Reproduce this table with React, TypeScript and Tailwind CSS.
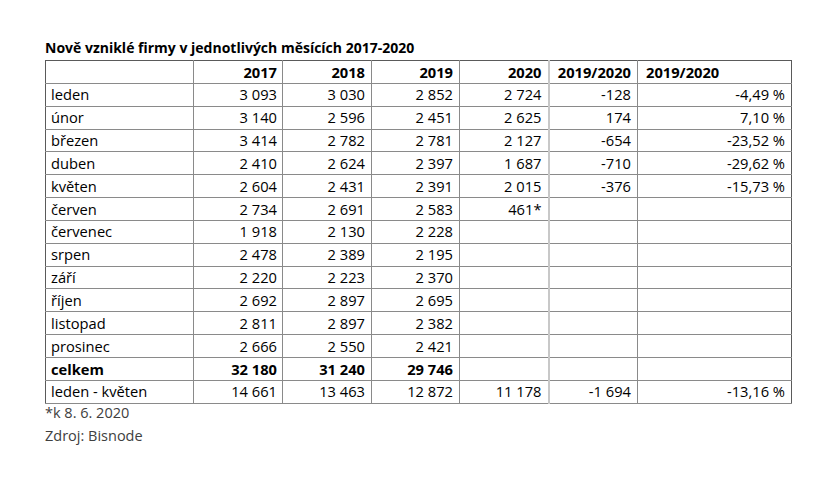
const rows: string[][] = [
  ["leden", "3 093", "3 030", "2 852", "2 724", "-128", "-4,49 %"],
  ["únor", "3 140", "2 596", "2 451", "2 625", "174", "7,10 %"],
  ["březen", "3 414", "2 782", "2 781", "2 127", "-654", "-23,52 %"],
  ["duben", "2 410", "2 624", "2 397", "1 687", "-710", "-29,62 %"],
  ["květen", "2 604", "2 431", "2 391", "2 015", "-376", "-15,73 %"],
  ["červen", "2 734", "2 691", "2 583", "461*", "", ""],
  ["červenec", "1 918", "2 130", "2 228", "", "", ""],
  ["srpen", "2 478", "2 389", "2 195", "", "", ""],
  ["září", "2 220", "2 223", "2 370", "", "", ""],
  ["říjen", "2 692", "2 897", "2 695", "", "", ""],
  ["listopad", "2 811", "2 897", "2 382", "", "", ""],
  ["prosinec", "2 666", "2 550", "2 421", "", "", ""],
];

const total = ["celkem", "32 180", "31 240", "29 746", "", "", ""];
const janMay = ["leden - květen", "14 661", "13 463", "12 872", "11 178", "-1 694", "-13,16 %"];

function Row({ cells, bold, topDark }: { cells: string[]; bold?: boolean; topDark?: boolean }) {
  return (
    <tr className={`h-[22.85px] ${topDark ? "border-t border-t-black" : ""} ${bold ? "font-bold" : ""}`}>
      <td className="px-[5px] text-left">{cells[0]}</td>
      <td className="px-[5px] text-right border-l border-[#8a8a8a]">{cells[1]}</td>
      <td className="px-[6px] text-right border-l border-[#8a8a8a]">{cells[2]}</td>
      <td className="px-[6px] text-right border-l border-[#8a8a8a]">{cells[3]}</td>
      <td className="px-[6px] text-right border-l border-[#8a8a8a]">{cells[4]}</td>
      <td className="px-[6px] text-right border-l-2 border-l-[#c8c8c8]">{cells[5]}</td>
      <td className="px-[6px] text-right border-l border-[#8a8a8a]">{cells[6]}</td>
    </tr>
  );
}

export default function App() {
  return (
    <div className="w-[840px] h-[480px] bg-white text-black font-['Open_Sans',sans-serif] text-[14.7px] leading-none">
      <div className="pl-[45px] pt-[41px]">
        <p className="font-bold h-[19px] text-[14px]">Nově vzniklé firmy v jednotlivých měsících 2017-2020</p>
        <table className="table-fixed border-collapse w-[746px] border border-[#5a5a5a]">
          <colgroup>
            <col className="w-[148px]" />
            <col className="w-[89px]" />
            <col className="w-[89px]" />
            <col className="w-[88px]" />
            <col className="w-[89px]" />
            <col className="w-[89px]" />
            <col className="w-[154px]" />
          </colgroup>
          <tbody className="[&_tr]:border-b [&_tr]:border-b-[#8a8a8a]">
            <tr className="h-[22.85px] font-bold">
              <td className="px-[5px]"></td>
              <td className="px-[5px] text-right border-l border-[#8a8a8a]">2017</td>
              <td className="px-[6px] text-right border-l border-[#8a8a8a]">2018</td>
              <td className="px-[6px] text-right border-l border-[#8a8a8a]">2019</td>
              <td className="px-[6px] text-right border-l border-[#8a8a8a]">2020</td>
              <td className="px-[6px] text-right border-l-2 border-l-[#c8c8c8]">2019/2020</td>
              <td className="px-[8px] text-left border-l border-[#8a8a8a]">2019/2020</td>
            </tr>
            {rows.map((r) => (
              <Row key={r[0]} cells={r} />
            ))}
            <Row cells={total} bold topDark />
            <Row cells={janMay} />
          </tbody>
        </table>
        <div className="text-[#404040] text-[14.5px]">
          <p className="h-[23px] leading-[18px]">*k 8. 6. 2020</p>
          <p className="h-[23px] leading-[18px]">Zdroj: Bisnode</p>
        </div>
      </div>
    </div>
  );
}
